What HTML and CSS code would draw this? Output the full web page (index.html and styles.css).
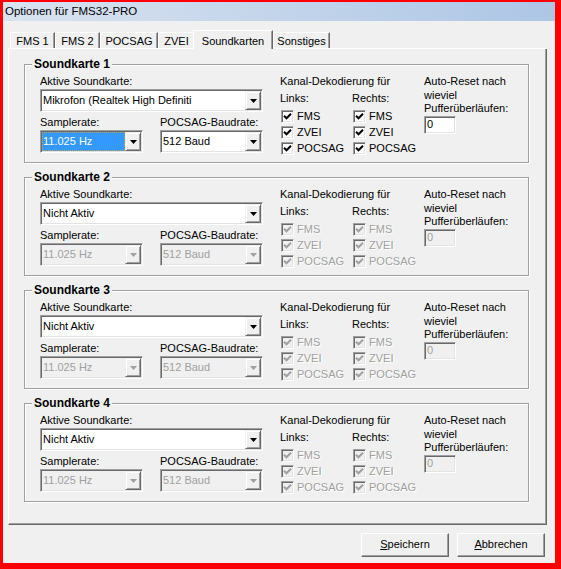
FILE: index.html
```html
<!DOCTYPE html>
<html lang="de">
<head>
    <meta charset="UTF-8">
    <title>Optionen für FMS32-PRO</title>
    <link rel="stylesheet" href="styles.css">
</head>
<body>

<div class="fenster">

    <div class="titel">Optionen für FMS32-PRO</div>

    <div class="inhalt">

        <div class="reiter">
            <div class="tab t-fms1">FMS 1</div>
            <div class="tab t-fms2">FMS 2</div>
            <div class="tab t-pocsag">POCSAG</div>
            <div class="tab t-zvei">ZVEI</div>
            <div class="tab t-sound aktiv">Soundkarten</div>
            <div class="tab t-sonst">Sonstiges</div>
        </div>

        <div class="seite">

            <!-- Soundkarte 1 (aktiv) -->
            <fieldset class="gruppe">
                <legend>Soundkarte 1</legend>
                <div class="gruppe-inhalt">
                    <div class="links-spalte">
                        <div class="lbl">Aktive Soundkarte:</div>
                        <div class="combo">
                            <span class="combo-text">Mikrofon (Realtek High Definiti</span>
                            <span class="combo-btn"><svg class="pfeil" width="7" height="4" viewBox="0 0 7 4"><path d="M0 0h7L3.5 4z"/></svg></span>
                        </div>
                        <div class="zeile">
                            <div class="feld">
                                <div class="lbl">Samplerate:</div>
                                <div class="combo">
                                    <span class="combo-text markiert">11.025 Hz</span>
                                    <span class="combo-btn"><svg class="pfeil" width="7" height="4" viewBox="0 0 7 4"><path d="M0 0h7L3.5 4z"/></svg></span>
                                </div>
                            </div>
                            <div class="feld">
                                <div class="lbl">POCSAG-Baudrate:</div>
                                <div class="combo">
                                    <span class="combo-text">512 Baud</span>
                                    <span class="combo-btn"><svg class="pfeil" width="7" height="4" viewBox="0 0 7 4"><path d="M0 0h7L3.5 4z"/></svg></span>
                                </div>
                            </div>
                        </div>
                    </div>
                    <div class="kanal">
                        <div class="lbl">Kanal-Dekodierung für</div>
                        <div class="kanal-spalten">
                            <div class="kanal-spalte">
                                <div class="lbl">Links:</div>
                                <div class="cb-liste">
                                    <div class="cb-zeile"><span class="cb"><svg width="9" height="9" viewBox="0 0 9 9"><path d="M1 3.8L3.5 6.3L8 1.8"/></svg></span>FMS</div>
                                    <div class="cb-zeile"><span class="cb"><svg width="9" height="9" viewBox="0 0 9 9"><path d="M1 3.8L3.5 6.3L8 1.8"/></svg></span>ZVEI</div>
                                    <div class="cb-zeile"><span class="cb"><svg width="9" height="9" viewBox="0 0 9 9"><path d="M1 3.8L3.5 6.3L8 1.8"/></svg></span>POCSAG</div>
                                </div>
                            </div>
                            <div class="kanal-spalte">
                                <div class="lbl">Rechts:</div>
                                <div class="cb-liste">
                                    <div class="cb-zeile"><span class="cb"><svg width="9" height="9" viewBox="0 0 9 9"><path d="M1 3.8L3.5 6.3L8 1.8"/></svg></span>FMS</div>
                                    <div class="cb-zeile"><span class="cb"><svg width="9" height="9" viewBox="0 0 9 9"><path d="M1 3.8L3.5 6.3L8 1.8"/></svg></span>ZVEI</div>
                                    <div class="cb-zeile"><span class="cb"><svg width="9" height="9" viewBox="0 0 9 9"><path d="M1 3.8L3.5 6.3L8 1.8"/></svg></span>POCSAG</div>
                                </div>
                            </div>
                        </div>
                    </div>
                    <div class="reset">
                        <div class="lbl mehrzeilig">Auto-Reset nach<br>wieviel<br>Pufferüberläufen:</div>
                        <div class="eingabe">0</div>
                    </div>
                </div>
            </fieldset>

            <!-- Soundkarte 2 -->
            <fieldset class="gruppe">
                <legend>Soundkarte 2</legend>
                <div class="gruppe-inhalt">
                    <div class="links-spalte">
                        <div class="lbl">Aktive Soundkarte:</div>
                        <div class="combo">
                            <span class="combo-text">Nicht Aktiv</span>
                            <span class="combo-btn"><svg class="pfeil" width="7" height="4" viewBox="0 0 7 4"><path d="M0 0h7L3.5 4z"/></svg></span>
                        </div>
                        <div class="zeile">
                            <div class="feld">
                                <div class="lbl">Samplerate:</div>
                                <div class="combo gesperrt">
                                    <span class="combo-text">11.025 Hz</span>
                                    <span class="combo-btn"><svg class="pfeil" width="7" height="4" viewBox="0 0 7 4"><path d="M0 0h7L3.5 4z"/></svg></span>
                                </div>
                            </div>
                            <div class="feld">
                                <div class="lbl">POCSAG-Baudrate:</div>
                                <div class="combo gesperrt">
                                    <span class="combo-text">512 Baud</span>
                                    <span class="combo-btn"><svg class="pfeil" width="7" height="4" viewBox="0 0 7 4"><path d="M0 0h7L3.5 4z"/></svg></span>
                                </div>
                            </div>
                        </div>
                    </div>
                    <div class="kanal">
                        <div class="lbl">Kanal-Dekodierung für</div>
                        <div class="kanal-spalten">
                            <div class="kanal-spalte">
                                <div class="lbl">Links:</div>
                                <div class="cb-liste">
                                    <div class="cb-zeile gesperrt"><span class="cb"><svg width="9" height="9" viewBox="0 0 9 9"><path d="M1 3.8L3.5 6.3L8 1.8"/></svg></span>FMS</div>
                                    <div class="cb-zeile gesperrt"><span class="cb"><svg width="9" height="9" viewBox="0 0 9 9"><path d="M1 3.8L3.5 6.3L8 1.8"/></svg></span>ZVEI</div>
                                    <div class="cb-zeile gesperrt"><span class="cb"><svg width="9" height="9" viewBox="0 0 9 9"><path d="M1 3.8L3.5 6.3L8 1.8"/></svg></span>POCSAG</div>
                                </div>
                            </div>
                            <div class="kanal-spalte">
                                <div class="lbl">Rechts:</div>
                                <div class="cb-liste">
                                    <div class="cb-zeile gesperrt"><span class="cb"><svg width="9" height="9" viewBox="0 0 9 9"><path d="M1 3.8L3.5 6.3L8 1.8"/></svg></span>FMS</div>
                                    <div class="cb-zeile gesperrt"><span class="cb"><svg width="9" height="9" viewBox="0 0 9 9"><path d="M1 3.8L3.5 6.3L8 1.8"/></svg></span>ZVEI</div>
                                    <div class="cb-zeile gesperrt"><span class="cb"><svg width="9" height="9" viewBox="0 0 9 9"><path d="M1 3.8L3.5 6.3L8 1.8"/></svg></span>POCSAG</div>
                                </div>
                            </div>
                        </div>
                    </div>
                    <div class="reset">
                        <div class="lbl mehrzeilig">Auto-Reset nach<br>wieviel<br>Pufferüberläufen:</div>
                        <div class="eingabe gesperrt">0</div>
                    </div>
                </div>
            </fieldset>

            <!-- Soundkarte 3 -->
            <fieldset class="gruppe">
                <legend>Soundkarte 3</legend>
                <div class="gruppe-inhalt">
                    <div class="links-spalte">
                        <div class="lbl">Aktive Soundkarte:</div>
                        <div class="combo">
                            <span class="combo-text">Nicht Aktiv</span>
                            <span class="combo-btn"><svg class="pfeil" width="7" height="4" viewBox="0 0 7 4"><path d="M0 0h7L3.5 4z"/></svg></span>
                        </div>
                        <div class="zeile">
                            <div class="feld">
                                <div class="lbl">Samplerate:</div>
                                <div class="combo gesperrt">
                                    <span class="combo-text">11.025 Hz</span>
                                    <span class="combo-btn"><svg class="pfeil" width="7" height="4" viewBox="0 0 7 4"><path d="M0 0h7L3.5 4z"/></svg></span>
                                </div>
                            </div>
                            <div class="feld">
                                <div class="lbl">POCSAG-Baudrate:</div>
                                <div class="combo gesperrt">
                                    <span class="combo-text">512 Baud</span>
                                    <span class="combo-btn"><svg class="pfeil" width="7" height="4" viewBox="0 0 7 4"><path d="M0 0h7L3.5 4z"/></svg></span>
                                </div>
                            </div>
                        </div>
                    </div>
                    <div class="kanal">
                        <div class="lbl">Kanal-Dekodierung für</div>
                        <div class="kanal-spalten">
                            <div class="kanal-spalte">
                                <div class="lbl">Links:</div>
                                <div class="cb-liste">
                                    <div class="cb-zeile gesperrt"><span class="cb"><svg width="9" height="9" viewBox="0 0 9 9"><path d="M1 3.8L3.5 6.3L8 1.8"/></svg></span>FMS</div>
                                    <div class="cb-zeile gesperrt"><span class="cb"><svg width="9" height="9" viewBox="0 0 9 9"><path d="M1 3.8L3.5 6.3L8 1.8"/></svg></span>ZVEI</div>
                                    <div class="cb-zeile gesperrt"><span class="cb"><svg width="9" height="9" viewBox="0 0 9 9"><path d="M1 3.8L3.5 6.3L8 1.8"/></svg></span>POCSAG</div>
                                </div>
                            </div>
                            <div class="kanal-spalte">
                                <div class="lbl">Rechts:</div>
                                <div class="cb-liste">
                                    <div class="cb-zeile gesperrt"><span class="cb"><svg width="9" height="9" viewBox="0 0 9 9"><path d="M1 3.8L3.5 6.3L8 1.8"/></svg></span>FMS</div>
                                    <div class="cb-zeile gesperrt"><span class="cb"><svg width="9" height="9" viewBox="0 0 9 9"><path d="M1 3.8L3.5 6.3L8 1.8"/></svg></span>ZVEI</div>
                                    <div class="cb-zeile gesperrt"><span class="cb"><svg width="9" height="9" viewBox="0 0 9 9"><path d="M1 3.8L3.5 6.3L8 1.8"/></svg></span>POCSAG</div>
                                </div>
                            </div>
                        </div>
                    </div>
                    <div class="reset">
                        <div class="lbl mehrzeilig">Auto-Reset nach<br>wieviel<br>Pufferüberläufen:</div>
                        <div class="eingabe gesperrt">0</div>
                    </div>
                </div>
            </fieldset>

            <!-- Soundkarte 4 -->
            <fieldset class="gruppe">
                <legend>Soundkarte 4</legend>
                <div class="gruppe-inhalt">
                    <div class="links-spalte">
                        <div class="lbl">Aktive Soundkarte:</div>
                        <div class="combo">
                            <span class="combo-text">Nicht Aktiv</span>
                            <span class="combo-btn"><svg class="pfeil" width="7" height="4" viewBox="0 0 7 4"><path d="M0 0h7L3.5 4z"/></svg></span>
                        </div>
                        <div class="zeile">
                            <div class="feld">
                                <div class="lbl">Samplerate:</div>
                                <div class="combo gesperrt">
                                    <span class="combo-text">11.025 Hz</span>
                                    <span class="combo-btn"><svg class="pfeil" width="7" height="4" viewBox="0 0 7 4"><path d="M0 0h7L3.5 4z"/></svg></span>
                                </div>
                            </div>
                            <div class="feld">
                                <div class="lbl">POCSAG-Baudrate:</div>
                                <div class="combo gesperrt">
                                    <span class="combo-text">512 Baud</span>
                                    <span class="combo-btn"><svg class="pfeil" width="7" height="4" viewBox="0 0 7 4"><path d="M0 0h7L3.5 4z"/></svg></span>
                                </div>
                            </div>
                        </div>
                    </div>
                    <div class="kanal">
                        <div class="lbl">Kanal-Dekodierung für</div>
                        <div class="kanal-spalten">
                            <div class="kanal-spalte">
                                <div class="lbl">Links:</div>
                                <div class="cb-liste">
                                    <div class="cb-zeile gesperrt"><span class="cb"><svg width="9" height="9" viewBox="0 0 9 9"><path d="M1 3.8L3.5 6.3L8 1.8"/></svg></span>FMS</div>
                                    <div class="cb-zeile gesperrt"><span class="cb"><svg width="9" height="9" viewBox="0 0 9 9"><path d="M1 3.8L3.5 6.3L8 1.8"/></svg></span>ZVEI</div>
                                    <div class="cb-zeile gesperrt"><span class="cb"><svg width="9" height="9" viewBox="0 0 9 9"><path d="M1 3.8L3.5 6.3L8 1.8"/></svg></span>POCSAG</div>
                                </div>
                            </div>
                            <div class="kanal-spalte">
                                <div class="lbl">Rechts:</div>
                                <div class="cb-liste">
                                    <div class="cb-zeile gesperrt"><span class="cb"><svg width="9" height="9" viewBox="0 0 9 9"><path d="M1 3.8L3.5 6.3L8 1.8"/></svg></span>FMS</div>
                                    <div class="cb-zeile gesperrt"><span class="cb"><svg width="9" height="9" viewBox="0 0 9 9"><path d="M1 3.8L3.5 6.3L8 1.8"/></svg></span>ZVEI</div>
                                    <div class="cb-zeile gesperrt"><span class="cb"><svg width="9" height="9" viewBox="0 0 9 9"><path d="M1 3.8L3.5 6.3L8 1.8"/></svg></span>POCSAG</div>
                                </div>
                            </div>
                        </div>
                    </div>
                    <div class="reset">
                        <div class="lbl mehrzeilig">Auto-Reset nach<br>wieviel<br>Pufferüberläufen:</div>
                        <div class="eingabe gesperrt">0</div>
                    </div>
                </div>
            </fieldset>

        </div>

        <div class="fuss">
            <div class="knopf"><u>S</u>peichern</div>
            <div class="knopf"><u>A</u>bbrechen</div>
        </div>

    </div>

</div>

</body>
</html>
```

FILE: styles.css
```css
* {
    box-sizing: border-box;
}
body {
    margin: 0;
    font-family: "Liberation Sans", Arial, sans-serif;
    font-size: 11px;
    color: #000;
    background: #fff;
}
.fenster {
    width: 561px;
    height: 569px;
    border-style: solid;
    border-color: #f00;
    border-width: 2px 6px 6px 3px;
    background: #f0f0f0;
    display: flex;
    flex-direction: column;
}
.titel {
    height: 19px;
    line-height: 19px;
    padding-left: 2px;
    font-size: 11.5px;
    background: linear-gradient(to right, #d9e3f0, #adc6e5);
}
.inhalt {
    flex: 1;
    padding: 9px 8px 0 5px;
}

/* Reiter */
.reiter {
    display: flex;
    align-items: flex-end;
    height: 19px;
    padding-left: 2px;
    background: linear-gradient(#fff, #fff) left bottom / 100% 1px no-repeat;
}
.tab {
    height: 16px;
    margin-bottom: 1px;
    padding-top: 1px;
    line-height: 14px;
    text-align: center;
    border-top: 1px solid #fff;
    border-left: 1px solid #fff;
    border-right: 1px solid #696969;
    box-shadow: inset -1px 0 #a0a0a0;
    background: #f0f0f0;
}
.tab.aktiv {
    height: 19px;
    margin-bottom: 0;
    margin-left: -2px;
    padding-top: 3px;
}
.t-fms1 { width: 45px; }
.t-fms2 { width: 45px; }
.t-pocsag { width: 58px; }
.t-zvei { width: 37px; }
.t-sound { width: 80px; }
.t-sonst { width: 57px; }

/* Seite */
.seite {
    border-left: 1px solid #fff;
    border-right: 1px solid #696969;
    border-bottom: 1px solid #696969;
    box-shadow: inset -1px -1px #a0a0a0;
    padding: 8px 17px 22px 15px;
}
.gruppe {
    margin: 0 0 7px;
    padding: 0;
    min-width: 0;
    border: 1px solid #a0a0a0;
    box-shadow: inset 1px 1px #fff, 1px 1px #fff;
}
.gruppe:last-child {
    margin-bottom: 0;
}
.gruppe legend {
    margin-left: 7px;
    padding: 0 2px;
    font-size: 12px;
    font-weight: bold;
    line-height: 14px;
    background: #f0f0f0;
}
.gruppe-inhalt {
    display: flex;
    align-items: flex-start;
    padding: 4px 0 6px 15px;
}
.lbl {
    line-height: 13px;
    white-space: nowrap;
}
.lbl.mehrzeilig {
    line-height: 13.5px;
}
.links-spalte {
    width: 223px;
}
.zeile {
    display: flex;
    gap: 17px;
    margin-top: 4px;
}
.feld {
    width: 103px;
}

/* Combobox */
.combo {
    display: flex;
    height: 23px;
    margin-top: 1px;
    padding: 1px;
    border: 1px solid;
    border-color: #a0a0a0 #fff #fff #a0a0a0;
    box-shadow: inset 1px 1px #696969, inset -1px -1px #e3e3e3;
    background: #fff;
}
.combo-text {
    flex: 1;
    min-width: 0;
    padding-left: 1px;
    line-height: 19px;
    white-space: nowrap;
    overflow: hidden;
}
.combo-text.markiert {
    background: #39f;
    color: #fff;
    outline: 1px dotted #c9a24a;
    outline-offset: -1px;
}
.combo-btn {
    width: 16px;
    height: 19px;
    display: flex;
    align-items: center;
    justify-content: center;
    border: 1px solid;
    border-color: #f0f0f0 #696969 #696969 #f0f0f0;
    box-shadow: inset 1px 1px #fff, inset -1px -1px #a0a0a0;
    background: #f0f0f0;
    color: #000;
}
.pfeil path {
    fill: currentColor;
}
.combo.gesperrt {
    background: #f0f0f0;
}
.combo.gesperrt .combo-text {
    color: #a0a0a0;
}
.combo.gesperrt .combo-btn {
    color: #a0a0a0;
}

/* Kanal-Dekodierung */
.kanal {
    width: 144px;
    margin-left: 17px;
}
.kanal-spalten {
    display: flex;
    margin-top: 4px;
}
.kanal-spalte {
    width: 72px;
}
.cb-liste {
    margin-top: 3px;
}
.cb-zeile {
    display: flex;
    align-items: center;
    height: 16px;
    padding-left: 1px;
}
.cb {
    width: 13px;
    height: 13px;
    margin-right: 3px;
    display: flex;
    align-items: center;
    justify-content: center;
    border: 1px solid;
    border-color: #a0a0a0 #fff #fff #a0a0a0;
    box-shadow: inset 1px 1px #696969, inset -1px -1px #e3e3e3;
    background: #fff;
}
.cb path {
    fill: none;
    stroke: #000;
    stroke-width: 2;
}
.cb-zeile.gesperrt {
    color: #a0a0a0;
    text-shadow: 1px 1px 0 #fff;
}
.cb-zeile.gesperrt .cb {
    background: #f0f0f0;
}
.cb-zeile.gesperrt .cb path {
    stroke: #a0a0a0;
}

/* Auto-Reset */
.reset {
    width: 95px;
}
.eingabe {
    width: 32px;
    height: 18px;
    padding-left: 2px;
    line-height: 14px;
    border: 1px solid;
    border-color: #a0a0a0 #fff #fff #a0a0a0;
    box-shadow: inset 1px 1px #696969, inset -1px -1px #e3e3e3;
    background: #fff;
}
.eingabe.gesperrt {
    background: #f0f0f0;
    color: #a0a0a0;
}

/* Knoepfe */
.fuss {
    display: flex;
    justify-content: flex-end;
    gap: 8px;
    padding: 8px 2px 0 0;
}
.knopf {
    width: 88px;
    height: 24px;
    line-height: 21px;
    text-align: center;
    border: 1px solid;
    border-color: #fff #696969 #696969 #fff;
    box-shadow: inset -1px -1px #a0a0a0;
    background: #f0f0f0;
}
```
